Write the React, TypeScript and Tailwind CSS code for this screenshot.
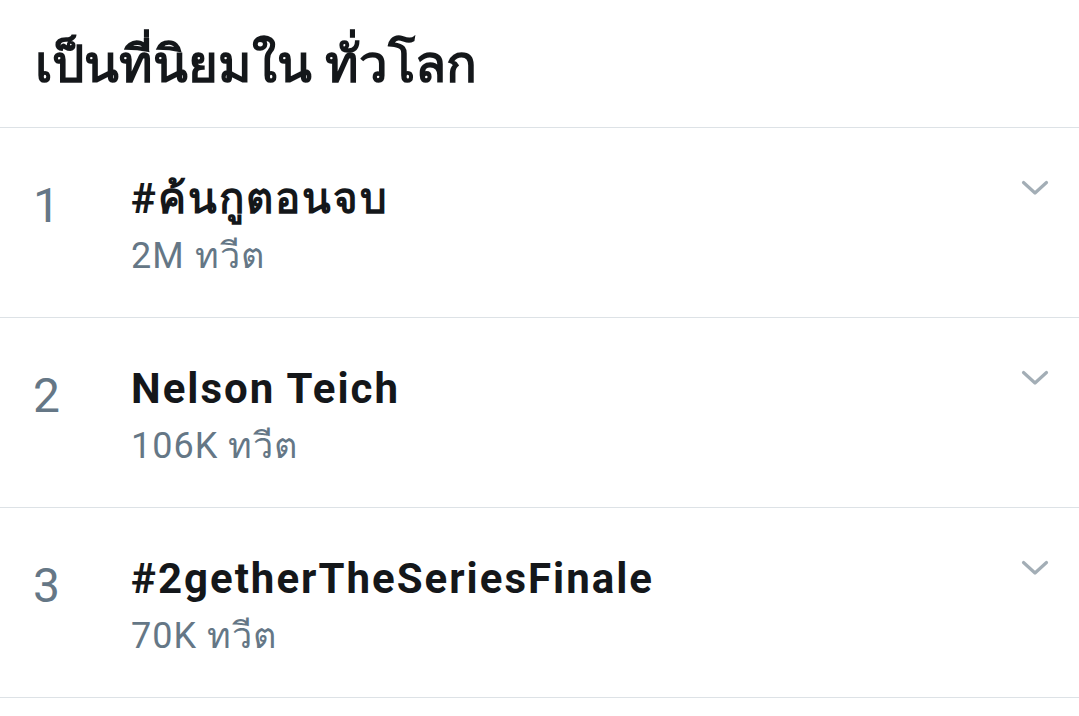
const trends = [
  { rank: 1, name: "#ค้นกูตอนจบ", count: "2M ทวีต" },
  { rank: 2, name: "Nelson Teich", count: "106K ทวีต" },
  { rank: 3, name: "#2getherTheSeriesFinale", count: "70K ทวีต" },
]

function Chevron() {
  return (
    <svg width="28" height="16" viewBox="0 0 28 16" fill="none">
      <polyline
        points="2.5,2.5 14,13 25.5,2.5"
        stroke="#a3aeb6"
        strokeWidth="3.2"
        strokeLinecap="round"
        strokeLinejoin="round"
      />
    </svg>
  )
}

export default function App() {
  return (
    <div className="min-h-screen bg-white font-['Roboto','Noto_Sans',sans-serif]">
      {/* Header */}
      <div className="h-[128px] border-b border-[#dde2e6] px-[35px] pt-[27px]">
        <h1 className="text-[51px] leading-[76px] font-bold text-[#14171a]">เป็นที่นิยมใน ทั่วโลก</h1>
      </div>

      {trends.map((t) => (
        <div key={t.rank} className="h-[190px] border-b border-[#dde2e6] flex">
          <div className="w-[131px] shrink-0 pl-[33px] pt-[50px] text-[48px] leading-[56px] text-[#657786]">
            {t.rank}
          </div>
          <div className="flex-1 pt-[44px]">
            <div className="text-[42px] leading-[54px] font-bold tracking-[2px] text-[#14171a]">{t.name}</div>
            <div className="mt-[4px] text-[36px] leading-[52px] tracking-[1px] text-[#657786]">{t.count}</div>
          </div>
          <div className="pr-[30px] pt-[52px]">
            <Chevron />
          </div>
        </div>
      ))}
    </div>
  )
}
